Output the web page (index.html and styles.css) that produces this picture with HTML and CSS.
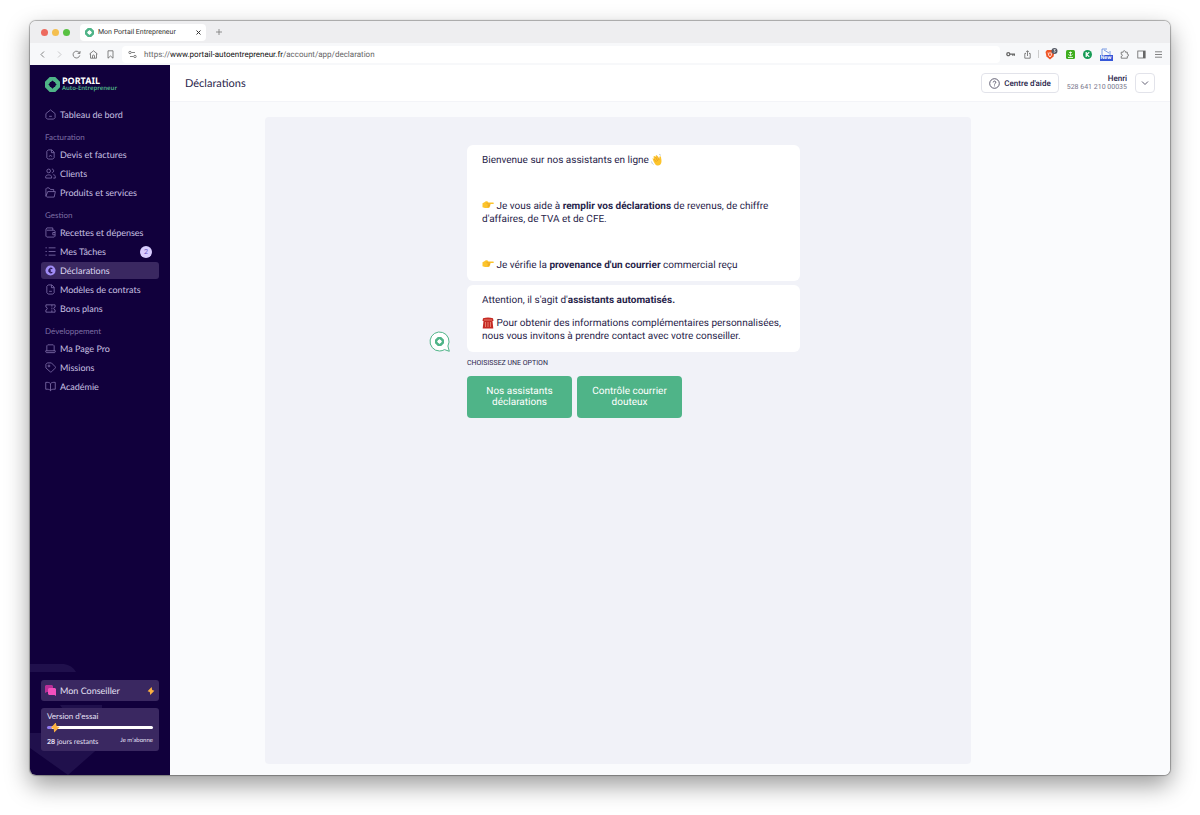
FILE: index.html
```html
<!DOCTYPE html>
<html lang="fr">
<head>
  <meta charset="UTF-8">
  <title>Mon Portail Entrepreneur</title>
  <link rel="stylesheet" href="styles.css">
</head>
<body>
  <svg width="0" height="0" class="defs" aria-hidden="true">
    <symbol id="logo" viewBox="0 0 16 16">
      <path fill="#4fb488" fill-rule="evenodd" d="M5 0h6l5 5v6l-5 5H5l-5-5V5zM8 3.6 6.2 5.4H5.2v1L3.6 8l1.6 1.6v1h1L8 12.4l1.8-1.8h1v-1L12.4 8l-1.6-1.6v-1h-1z"/>
    </symbol>
    <symbol id="hand" viewBox="0 0 12 10">
      <path fill="#fcc42c" d="M.5 3.200C2 2.800 3 1.500 4.300 1.300c1-.1 1.600.3 2.200 1.200h4.600c1 0 1 1.500 0 1.500H8.200c.5.4.4 1.200-.2 1.400.4.5.2 1.200-.5 1.300.2.6-.2 1.200-1.200 1.200H3L.5 7.200z"/>
      <path stroke="#dc8a1c" stroke-width=".5" fill="none" d="M4.500 3.300 6 4h2.200M5.800 5.400H8M5.600 6.700h1.900"/>
    </symbol>
    <symbol id="bolt" viewBox="0 0 8 8">
      <path fill="#fbb040" d="M4.600 0 .6 4.200l2.200.8L3.200 8l4.200-4.200-2.200-.8z"/>
    </symbol>
  </svg>

  <div class="window">
    <div class="tabs">
      <span class="dot red"></span><span class="dot yellow"></span><span class="dot green"></span>
      <div class="tab">
        <svg width="9" height="9"><use href="#logo"/></svg>
        <span>Mon Portail Entrepreneur</span>
        <button class="icon-btn" aria-label="Fermer l'onglet"><svg width="5" height="5" viewBox="0 0 5 5"><path d="M.5.5l4 4m0-4l-4 4" stroke="#333"/></svg></button>
      </div>
      <button class="icon-btn" aria-label="Nouvel onglet"><svg width="6" height="6" viewBox="0 0 6 6"><path d="M3 0v6M0 3h6" stroke="#777" stroke-width=".8"/></svg></button>
    </div>

    <div class="toolbar">
      <button class="icon-btn" aria-label="Retour"><svg width="9" height="9" viewBox="0 0 9 9"><path d="M6 1.500l-3 3 3 3"/></svg></button>
      <button class="icon-btn faded" aria-label="Avancer"><svg width="9" height="9" viewBox="0 0 9 9"><path d="M3 1.500l3 3-3 3"/></svg></button>
      <button class="icon-btn" aria-label="Actualiser"><svg width="9" height="9" viewBox="0 0 9 9"><path d="M7.600 3.200A3.400 3.400 0 1 0 7.800 5.400M8 1v2.400H5.600"/></svg></button>
      <button class="icon-btn" aria-label="Accueil"><svg width="9" height="9" viewBox="0 0 9 9"><path d="M.5 4 4.500.8l4 3.200M1.500 3.500v4.700h6V3.500M3.500 8V6a1 1 0 0 1 2 0v2"/></svg></button>
      <button class="icon-btn" aria-label="Favori"><svg width="9" height="9" viewBox="0 0 9 9"><path d="M2 .8h5v7.400L4.500 6 2 8.200z"/></svg></button>
      <div class="address">
        <svg width="9" height="9" viewBox="0 0 9 9"><path d="M3.500 2.500H7M2 6.500h3.500"/><circle cx="2" cy="2.500" r="1.200"/><circle cx="7" cy="6.500" r="1.200"/></svg>
        <span>https://<b>www.portail-autoentrepreneur.fr</b>/account/app/declaration</span>
      </div>
      <div class="extensions">
        <svg width="9" height="9" viewBox="0 0 9 9"><circle cx="2.300" cy="4.200" r="1.500" stroke-width="1.300"/><path d="M4 4.200h4.500v1.500M6.800 4.200v1.500" stroke-width="1.300"/></svg>
        <svg width="9" height="9" viewBox="0 0 9 9"><path d="M3 3.500H1.800v4.700h5.400V3.500H6M4.500 6V.8M3 2.200 4.500.7 6 2.200"/></svg>
        <span class="sep"></span>
        <svg width="13" height="12" viewBox="0 0 13 12"><path fill="#ef5526" stroke="none" d="M2 2h6l1.500 2-1 4.500L5 11.500 1.500 8.500.5 4z"/><path stroke="#fff" d="M3 4.500 4 8l1 1 1-1 1-3.500M5 4v2"/><circle cx="9.500" cy="3" r="3" fill="#555a66" stroke="none"/><path stroke="#fff" stroke-width=".7" d="M8.700 1.600h1.600L9.400 2.800c1.400 0 1.200 1.600-.7 1.400"/></svg>
        <svg width="9" height="9" viewBox="0 0 9 9"><rect width="9" height="9" rx="1.500" fill="#3fae1f" stroke="none"/><path stroke="#fff" d="M4.500 1.500V6M2.500 4.200l2 2 2-2M2 7.500h5M3 2.500h3"/></svg>
        <svg width="9" height="9" viewBox="0 0 9 9"><circle cx="4.500" cy="4.500" r="4.500" fill="#169b55" stroke="none"/><path stroke="#fff" stroke-width="1.200" d="M3.200 2v5M6.300 2.200 3.600 4.500l2.700 2.300"/></svg>
        <span class="new"><svg width="10" height="7" viewBox="0 0 10 7"><path d="M1 7V1h5M9 3v4M3 2l5 3" stroke="#5b84dd"/></svg><i>New</i></span>
        <svg width="9" height="9" viewBox="0 0 9 9"><path d="M1.200 2.200h2C2.800.2 5.800.2 5.400 2.200h1.900v2c1.800-.4 1.800 2.400 0 2v2H1.200V6.300c1.600.2 1.600-2.200 0-2z"/></svg>
        <svg width="9" height="9" viewBox="0 0 9 9"><rect x=".8" y="1" width="7.400" height="7"/><path d="M7 1v7" stroke-width="2"/></svg>
        <svg width="9" height="9" viewBox="0 0 9 9"><path d="M1 1.800h7M1 4.500h7M1 7.200h7"/></svg>
      </div>
    </div>

    <div class="app">
      <aside class="sidebar">
        <svg class="shapes" viewBox="0 0 140 112" aria-hidden="true"><path d="M0 1h34q8 1 12 8H0zM30 42h42v40L38 112 0 85V70h50z"/></svg>
        <a class="brand" href="#">
          <svg width="15" height="15"><use href="#logo"/></svg>
          <span><strong>PORTAIL</strong><em>Auto-Entrepreneur</em></span>
        </a>
        <nav>
          <a href="#"><svg viewBox="0 0 12 12"><path d="M1 5 6 1l5 4v4.500L9.500 11h-7L1 9.500zM4.500 8h3"/></svg>Tableau de bord</a>
          <h2>Facturation</h2>
          <a href="#"><svg viewBox="0 0 12 12"><path d="M3.500 1h4L10 3.500v6L8.500 11h-5L2 9.500v-7zM7 1v3h3M4.500 8.500 6 6.500l1.500 2"/></svg>Devis et factures</a>
          <a href="#"><svg viewBox="0 0 12 12"><circle cx="4" cy="3.200" r="2"/><path d="M.8 11V9.200C1 7 7 7 7.200 9.200V11zM7.500 1.200c2.600-.2 2.600 4 0 4M9 7.300c1.600.2 2.200 1 2.200 2V11H9"/></svg>Clients</a>
          <a href="#"><svg viewBox="0 0 12 12"><path d="M1 10V2l1-1h2.500L6 2.700h3.500V5M1 10l2-5h8.300L10 11H2z"/></svg>Produits et services</a>
          <h2>Gestion</h2>
          <a href="#"><svg viewBox="0 0 12 12"><path d="M1 3v7l1 1h8l1-1V4.500L10 3.500H2L1 2.500 2 1h6.500v2.500M11 6H8.500v2.500H11"/></svg>Recettes et dépenses</a>
          <a href="#"><svg viewBox="0 0 12 12"><path d="M4 2h7.500M4 6h7.500M4 10h7.500M.5 2H2M.5 6H2M.5 10H2"/></svg>Mes Tâches<span class="badge">2</span></a>
          <a href="#" class="active"><svg viewBox="0 0 12 12"><circle class="coin" cx="6" cy="6" r="5.500"/><path class="euro" d="M8 4C5.500 2.500 4.500 4.500 4.500 6s1 3.500 3.500 2M3.500 5.500h3M3.500 6.800h3"/></svg>Déclarations</a>
          <a href="#"><svg viewBox="0 0 12 12"><path d="M3.500 1h4L10 3.500v6L8.500 11h-5L2 9.500v-7zM7 1v3h3M4.500 8h3"/></svg>Modèles de contrats</a>
          <a href="#"><svg viewBox="0 0 12 12"><path d="M1 2h10v2.500c-2 .5-2 2.500 0 3V10H1V7.500c2-.5 2-2.500 0-3zM7.500 2v2M7.500 5v2M7.500 8v2"/></svg>Bons plans</a>
          <h2>Développement</h2>
          <a href="#"><svg viewBox="0 0 12 12"><path d="M2 8.500V3l1-1h6l1 1v5.500M.8 8.500h10.400v1L10.500 10.500h-9L.8 9.500z"/></svg>Ma Page Pro</a>
          <a href="#"><svg viewBox="0 0 12 12"><path d="M1 2.500 2.500 1H7l4 4c.6.6.6 1.200 0 1.800L7.300 10.500c-.6.6-1.200.6-1.800 0L1 6.500z"/><circle cx="4.300" cy="4.300" r="1"/></svg>Missions</a>
          <a href="#"><svg viewBox="0 0 12 12"><path d="M6 3C5 1.500 3 1.300.8 1.500V9C3 8.800 5 9 6 10.500 7 9 9 8.800 11.200 9V1.500C9 1.300 7 1.500 6 3zM6 3v7.500"/></svg>Académie</a>
        </nav>
        <div class="side-bottom">
          <button class="adviser">
            <svg width="11" height="11" viewBox="0 0 11 11"><path fill="#b92f98" d="M1 0h6l1 1v5L7 7H2L0 8V1z"/><path fill="#f250bd" d="M4 3h6l1 1v7L9.500 10H4L3 9V4z"/></svg>
            Mon Conseiller
            <svg class="bolt" width="8" height="8"><use href="#bolt"/></svg>
          </button>
          <div class="trial">
            <label for="trial">Version d'essai</label>
            <input type="range" id="trial" min="0" max="30" value="1">
            <div class="trial-row"><span><b>28</b> jours restants</span><a href="#">Je m'abonne</a></div>
          </div>
        </div>
      </aside>

      <div class="content">
        <header>
          <h1>Déclarations</h1>
          <button class="help"><svg width="11" height="11" viewBox="0 0 11 11"><circle cx="5.500" cy="5.500" r="4.800"/><path d="M4.200 4.400c0-1.700 2.600-1.700 2.600-.1 0 1.200-1.300 1-1.300 2.300M5.500 7.500v.8"/></svg>Centre d'aide</button>
          <div class="user"><strong>Henri</strong><span>528 641 210 00035</span></div>
          <button class="menu" aria-label="Menu du compte"><svg width="8" height="8" viewBox="0 0 8 8"><path d="M1 2.500 4 5.500l3-3"/></svg></button>
        </header>
        <main>
          <section class="panel">
            <div class="chat">
              <svg class="bot" width="22" height="21" viewBox="0 0 22 21"><path fill="#fff" stroke="#4fb488" d="M10.500 20A9.500 9.500 0 1 1 18.900 15L20.300 20.300 15.500 18.600A9.500 9.500 0 0 1 10.500 20z"/><use href="#logo" x="6" y="6" width="9" height="9"/></svg>
              <div class="messages">
                <div class="bubble">
                  <p>Bienvenue sur nos assistants en ligne <svg width="12" height="12" viewBox="0 0 12 12"><path fill="#fcc42c" d="M1.500 4.500c.5-.5 1 0 1.500.5L2.500 2.500c.5-1 1.300-.5 2 .5L4.800 1.500c.8-.8 1.500 0 2 1L8 5l.6-2.500c1-.6 1.600.3 1.500 1.500.9 4 .4 7-3 7.500C4.500 11.800 3 9 1.500 4.500z"/><path stroke="#dc8a1c" stroke-width=".5" fill="none" d="M3 5l2.500 3M4.500 3l2.300 4M6.800 2.500 8 6"/><path stroke="#9ab" stroke-width=".6" fill="none" d="M.5 7.500C.8 9 1.500 10 2.500 10.500M8 .5c.8 0 1.500.3 2 1"/></svg></p>
                  <p class="blank"></p>
                  <p><svg class="point" width="12" height="10"><use href="#hand"/></svg> Je vous aide à <b>remplir vos déclarations</b> de revenus, de chiffre d'affaires, de TVA et de CFE.</p>
                  <p class="blank"></p>
                  <p><svg class="point" width="12" height="10"><use href="#hand"/></svg> Je vérifie la <b>provenance d'un courrier</b> commercial reçu</p>
                </div>
                <div class="bubble">
                  <p>Attention, il s'agit d'<b>assistants automatisés.</b></p>
                  <p><svg width="12" height="12" viewBox="0 0 12 12"><path fill="#c62a24" d="M1 1.200Q6-.4 11 1.200l.5 2.800h-1l.8 7.500H.7L1.500 4h-1z"/><path stroke="#f0a08a" stroke-width=".7" d="M3.500 5v5M6 5v5M8.500 5v5M2 3h8"/></svg> Pour obtenir des informations complémentaires personnalisées, nous vous invitons à prendre contact avec votre conseiller.</p>
                </div>
              </div>
              <div class="options">
                <h3>CHOISISSEZ UNE OPTION</h3>
                <div class="choices">
                  <button>Nos assistants déclarations</button>
                  <button>Contrôle courrier douteux</button>
                </div>
              </div>
            </div>
          </section>
        </main>
      </div>
    </div>
  </div>
</body>
</html>
```
FILE: styles.css
```css
* {
  margin: 0;
  padding: 0;
  box-sizing: border-box;
}

body {
  background: #fff;
  height: 100vh;
  padding: 21px 30px 40px;
  font-family: Roboto, sans-serif;
  color: #28244a;
  text-rendering: geometricPrecision;
}

button {
  font-family: inherit;
  color: inherit;
  cursor: pointer;
  text-rendering: inherit;
}

a {
  color: inherit;
  text-decoration: none;
}

.defs {
  position: absolute;
}

.window {
  height: 100%;
  display: flex;
  flex-direction: column;
  border-radius: 6px;
  overflow: hidden;
  box-shadow: 0 0 1px 1px rgba(0, 0, 0, 0.3), 0 10px 24px rgba(0, 0, 0, 0.4);
}

/* browser bar */
.tabs {
  height: 22px;
  background: #eeeef0;
  display: flex;
  align-items: center;
  gap: 4px;
  padding-left: 11px;
}

.dot {
  width: 7px;
  height: 7px;
  border-radius: 50%;
}

.red { background: #ed6a5e; }
.yellow { background: #f4bf4f; }
.green { background: #58c142; }

.tab {
  display: flex;
  align-items: center;
  gap: 4px;
  width: 126px;
  height: 17px;
  margin: 0 5px 0 6px;
  padding: 0 4px 0 5px;
  background: #fff;
  border-radius: 4px;
  font-size: 7px;
  color: #333;
}

.tab span {
  flex: 1;
}

.icon-btn {
  display: flex;
  border: none;
  background: none;
  padding: 1px;
}

.toolbar {
  height: 22px;
  background: #f7f8fa;
  display: flex;
  align-items: center;
  gap: 6px;
  padding: 0 7px;
}

.toolbar svg {
  fill: none;
  stroke: #666;
  stroke-width: 0.8;
}

.faded {
  opacity: 0.4;
}

.address {
  flex: 1;
  height: 17px;
  display: flex;
  align-items: center;
  gap: 7px;
  padding-left: 6px;
  background: #fff;
  border-radius: 4px;
  font-size: 8px;
  color: #666;
}

.address b {
  font-weight: 400;
  color: #111;
}

.extensions {
  display: flex;
  align-items: center;
  gap: 8px;
}

.sep {
  width: 1px;
  height: 8px;
  margin: 0 -2px;
  background: #ccc;
}

.new {
  width: 12px;
  display: flex;
  flex-direction: column;
  align-items: center;
}

.new i {
  background: #3557d8;
  color: #fff;
  font: bold 5px Inter, sans-serif;
  padding: 0 1px;
}

.app {
  flex: 1;
  display: flex;
  min-height: 0;
}

/* sidebar */
.sidebar {
  position: relative;
  width: 140px;
  flex-shrink: 0;
  display: flex;
  flex-direction: column;
  padding: 11px 11px 24px;
  background: #11003c;
  color: #c9c0e2;
  font-family: Lato, sans-serif;
}

.shapes {
  position: absolute;
  left: 0;
  bottom: 0;
  width: 140px;
  fill: #20104c;
}

.brand {
  display: flex;
  align-items: center;
  gap: 2px;
  padding-left: 4px;
  margin-bottom: 14px;
}

.brand span {
  display: flex;
  flex-direction: column;
}

.brand strong {
  font: bold 9px/9px "Noto Sans", sans-serif;
  color: #fff;
}

.brand em {
  font: normal 600 6px/7px "Noto Sans", sans-serif;
  color: #4fb488;
}

nav {
  display: flex;
  flex-direction: column;
  gap: 2px;
}

nav a {
  height: 17px;
  display: flex;
  align-items: center;
  gap: 4px;
  padding: 0 7px 0 4px;
  border-radius: 3px;
  font-size: 9px;
}

nav svg {
  width: 11px;
  height: 11px;
  fill: none;
  stroke: #8d7db8;
  stroke-width: 0.8;
}

nav h2 {
  padding: 5px 0 0 4px;
  font-size: 8px;
  line-height: 14px;
  font-weight: 400;
  color: #7c6da3;
}

.active {
  background: #3a2861;
  color: #ddd6f0;
}

nav .coin {
  fill: #a08cf5;
  stroke: none;
}

nav .euro {
  stroke: #2b1858;
  stroke-width: 1.2;
}

.badge {
  width: 12px;
  height: 12px;
  margin-left: auto;
  border-radius: 50%;
  background: #d9ccff;
  color: #6a4fc0;
  font-size: 7px;
  line-height: 12px;
  text-align: center;
}

.side-bottom {
  position: relative;
  margin-top: auto;
  display: flex;
  flex-direction: column;
  gap: 7px;
}

.adviser {
  height: 21px;
  display: flex;
  align-items: center;
  gap: 4px;
  padding: 0 4px;
  border: none;
  border-radius: 3px;
  background: #3a2861;
  color: #e6e0f5;
  font-size: 9px;
}

.bolt {
  margin-left: auto;
}

.trial {
  padding: 3px 6px 4px;
  border-radius: 3px;
  background: #3a2861;
  color: #e6e0f5;
  font-size: 7px;
}

.trial label {
  display: block;
  font-size: 8px;
  line-height: 11px;
}

.trial input {
  appearance: none;
  display: block;
  width: 100%;
  height: 3px;
  margin: 4px 0 8px;
  border-radius: 2px;
  background: linear-gradient(90deg, #8f78ee 5%, #fff 5%);
}

.trial input::-webkit-slider-thumb {
  appearance: none;
  width: 10px;
  height: 10px;
  background: #fbb040;
  clip-path: polygon(55% 0, 5% 55%, 35% 62%, 40% 100%, 95% 45%, 65% 38%);
}

.trial-row {
  display: flex;
  justify-content: space-between;
  line-height: 10px;
}

.trial-row a {
  font-size: 6px;
  line-height: 8px;
}

/* page */
.content {
  flex: 1;
  display: flex;
  flex-direction: column;
  background: #fafbfd;
}

header {
  height: 37px;
  display: flex;
  align-items: center;
  gap: 8px;
  padding: 0 15px;
  background: #fff;
  border-bottom: 1px solid #f3f4f8;
}

h1 {
  flex: 1;
  font: 400 11px Lato, sans-serif;
}

header svg {
  fill: none;
  stroke: #39364f;
  stroke-width: 0.8;
}

.help,
.menu {
  height: 20px;
  display: flex;
  align-items: center;
  gap: 4px;
  padding: 0 7px;
  border: 1px solid #e2e3ea;
  border-radius: 4px;
  background: #fff;
  font-size: 8px;
  font-weight: 500;
}

.menu {
  padding: 0 5px;
}

.user {
  display: flex;
  flex-direction: column;
  text-align: right;
  font-size: 7px;
  line-height: 9px;
  color: #77758a;
}

.user strong {
  font-size: 8px;
  font-weight: 500;
  color: #28244a;
}

main {
  flex: 1;
  display: flex;
  padding: 15px 199px 11px 95px;
}

.panel {
  flex: 1;
  padding: 28px 7px 28px 0;
  border-radius: 4px;
  background: #f1f2f8;
}

.chat {
  display: grid;
  grid-template-columns: 22px 333px;
  gap: 6px 16px;
  justify-content: center;
}

.bot {
  align-self: end;
}

.messages {
  display: flex;
  flex-direction: column;
  gap: 4px;
}

.bubble {
  padding: 9px 15px;
  border-radius: 6px;
  background: #fff;
  font-size: 10px;
  line-height: 13px;
}

.bubble p + p {
  margin-top: 10px;
}

.bubble svg {
  vertical-align: -3px;
}

.bubble .point {
  vertical-align: -1px;
}

.bubble b {
  font-weight: 700;
}

.blank {
  height: 13px;
}

.options {
  grid-column: 2;
}

h3 {
  margin-bottom: 7px;
  font-size: 7px;
  line-height: 11px;
  font-weight: 400;
}

.choices {
  display: flex;
  gap: 5px;
}

.choices button {
  width: 105px;
  padding: 10px 14px;
  border: none;
  border-radius: 4px;
  background: #4fb488;
  color: #fff;
  font-size: 10px;
  line-height: 11px;
}
```
